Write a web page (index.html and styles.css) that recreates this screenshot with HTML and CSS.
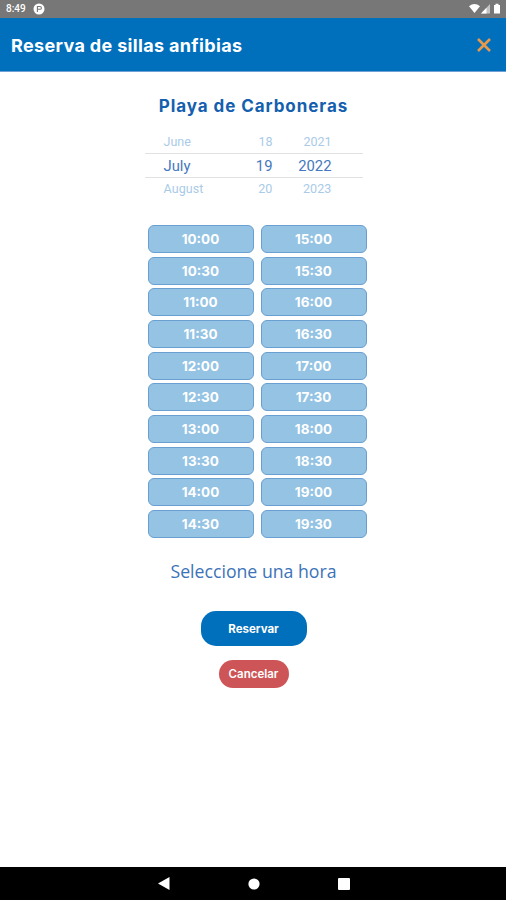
FILE: index.html
```html
<!DOCTYPE html>
<html lang="es">
<head>
<meta charset="utf-8">
<title>Reserva de sillas anfibias</title>
<link rel="stylesheet" href="styles.css">
</head>
<body>
<div class="status">
  <span class="clock">8:49</span>
  <svg class="notice" width="12" height="12" viewBox="0 0 12 12"><circle cx="6" cy="6" r="5.5" fill="#fff"/><path d="M4.4 9V3.5H7a1.4 1.4 0 0 1 0 2.8H4.4" fill="none" stroke="#777" stroke-width="1.1"/></svg>
  <svg class="signals" width="34" height="12" viewBox="0 0 34 12"><path d="M0 3.2Q5.5-1.2 11 3.2L5.5 10Z" fill="#fff"/><path d="M12 10.5L21 1V10.5Z" fill="#c4c4c4"/><path d="M12 10.5L17.5 4.8V10.5Z" fill="#fff"/><path d="M25 2H26.5V.7H29.5V2H31V10.5H25Z" fill="#fff"/></svg>
</div>
<header class="bar">
  <h1>Reserva de sillas anfibias</h1>
  <svg width="14" height="14" viewBox="0 0 14 14"><path d="M1 1L13 13M13 1L1 13" stroke="#e9994a" stroke-width="2.6"/></svg>
</header>
<main>
  <h2>Playa de Carboneras</h2>
  <div class="picker">
    <div class="row dim"><span class="month">June</span><span class="day">18</span><span class="year">2021</span></div>
    <div class="row selected"><span class="month">July</span><span class="day">19</span><span class="year">2022</span></div>
    <div class="row dim last"><span class="month">August</span><span class="day">20</span><span class="year">2023</span></div>
  </div>
  <div class="times">
    <button>10:00</button><button>10:30</button><button>11:00</button><button>11:30</button><button>12:00</button><button>12:30</button><button>13:00</button><button>13:30</button><button>14:00</button><button>14:30</button>
    <button>15:00</button><button>15:30</button><button>16:00</button><button>16:30</button><button>17:00</button><button>17:30</button><button>18:00</button><button>18:30</button><button>19:00</button><button>19:30</button>
  </div>
  <p class="hint">Seleccione una hora</p>
  <button class="reserve">Reservar</button>
  <button class="cancel">Cancelar</button>
</main>
<nav class="system">
  <svg width="12" height="13" viewBox="0 0 12 13"><path d="M0 6.5L11.5 0V13Z" fill="#fff"/></svg>
  <svg width="12" height="12" viewBox="0 0 12 12"><circle cx="6" cy="6" r="5.6" fill="#fff"/></svg>
  <svg width="12" height="12" viewBox="0 0 12 12"><rect width="12" height="12" rx="1" fill="#fff"/></svg>
</nav>
</body>
</html>
```
FILE: styles.css
```css
* { box-sizing: border-box; }
body { margin: 0; width: 506px; height: 900px; display: flex; flex-direction: column; background: #fff; font-family: Inter, sans-serif; overflow: hidden; }
svg { display: block; flex: none; }
h1, h2, p { margin: 0; white-space: nowrap; }
button { margin: 0; padding: 0; border: 0; font-family: inherit; color: #fff; white-space: nowrap; }
.status { height: 18px; flex: none; display: flex; align-items: center; padding: 0 3px 0 6px; background: #777; color: #fff; }
.clock { width: 27px; font: 500 10px/18px Roboto, sans-serif; }
.signals { margin-left: auto; }
.bar { height: 54px; flex: none; display: flex; align-items: center; justify-content: space-between; padding: 0 15px 0 11px; background: #0070bd; border-bottom: 1px solid #6f9fd4; color: #fff; }
h1 { padding-top: 2px; font-size: 18px; line-height: 24px; font-weight: 700; letter-spacing: 0.34px; }
main { flex: 1; display: flex; flex-direction: column; align-items: center; }
h2 { margin: 22px 0 0 1px; font-size: 17px; line-height: 24px; font-weight: 700; letter-spacing: 0.93px; color: #1460ae; }
.picker { width: 218px; margin: 12px 0 0 1px; font-family: Roboto, sans-serif; }
.row { height: 23px; display: flex; line-height: 24px; }
.dim { font-size: 12.5px; color: #a9cbe8; }
.last { line-height: 22px; letter-spacing: 0.1px; }
.selected { height: 25px; border-top: 1px solid #e2e2e2; border-bottom: 1px solid #e2e2e2; font-size: 14.8px; color: #4478bc; }
.month { width: 78px; padding-left: 19px; }
.day { width: 50px; text-align: right; }
.year { width: 59px; text-align: right; }
.times { margin: 24px 0 0 8px; display: grid; grid-auto-flow: column; grid-template-rows: repeat(10, 28px); grid-template-columns: 106px 106px; gap: 3.67px 7px; }
.times button { border: 1px solid #699fd1; border-radius: 6px; background: #94c3e3; font-size: 13.5px; font-weight: 700; }
.hint { margin-top: 21px; padding-left: 1px; font: 400 17.7px/24px "Open Sans", sans-serif; color: #3c73b8; }
.reserve { margin: 28px 0 0 1px; padding-top: 1px; width: 106px; height: 35px; border-radius: 15px; background: #0070bd; font-size: 11.5px; font-weight: 700; }
.cancel { margin: 14px 0 0 1px; width: 70px; height: 28px; border-radius: 14px; background: #cd5557; font-size: 11.5px; font-weight: 600; }
.system { height: 33px; flex: none; display: flex; align-items: center; justify-content: center; gap: 78px; padding-left: 1px; background: #000; }
```
